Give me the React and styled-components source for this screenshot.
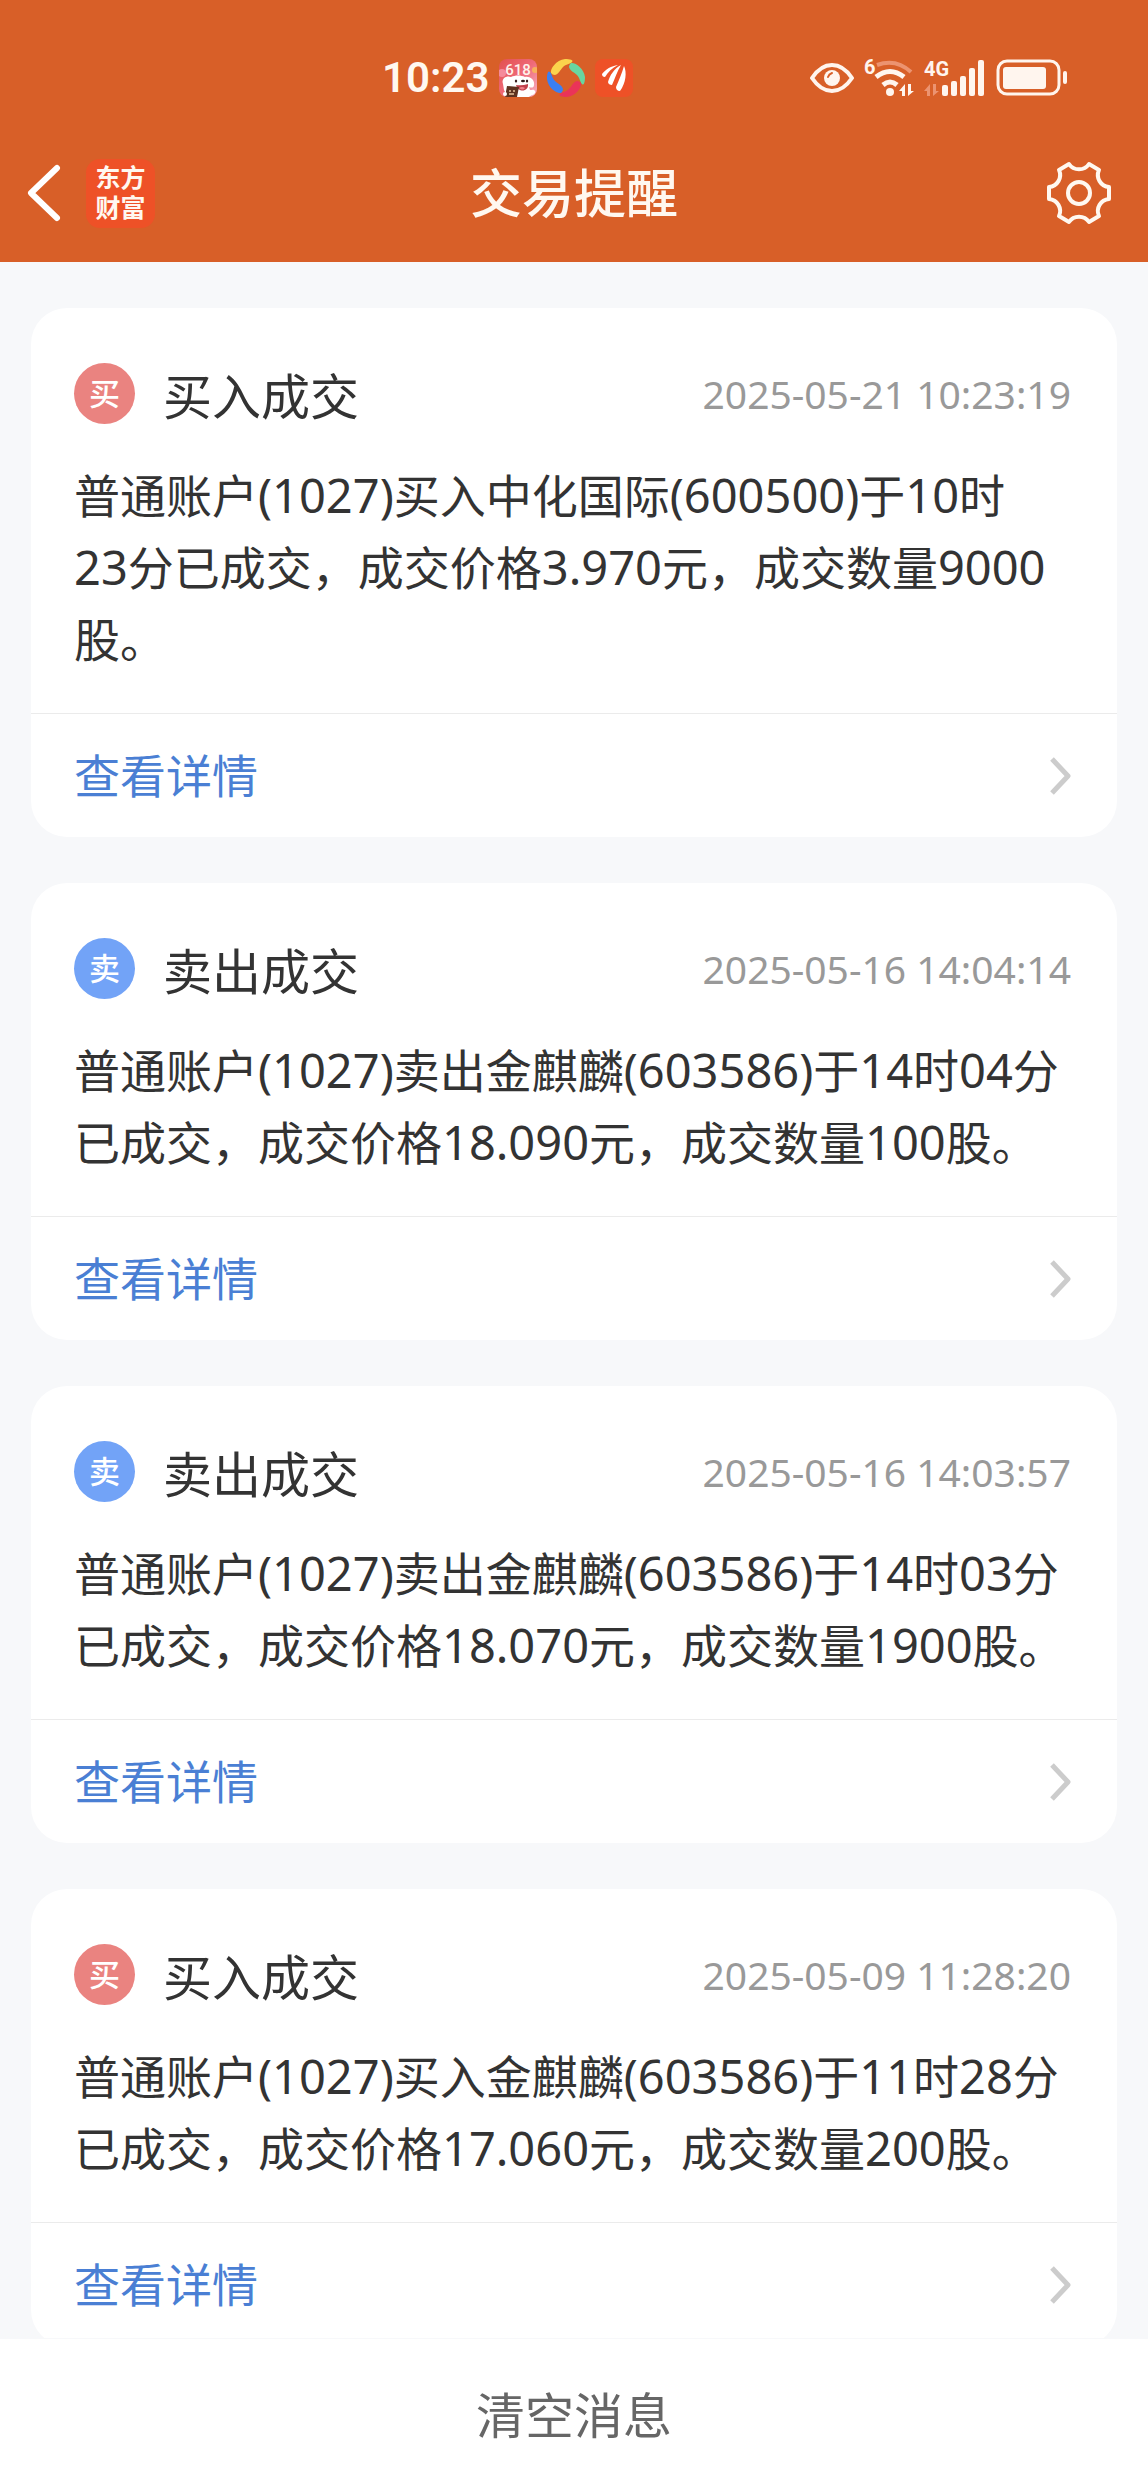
import React from 'react'
import styled, { createGlobalStyle } from 'styled-components'

const messages = [
  {
    id: 1,
    type: 'buy',
    time: '2025-05-21 10:23:19',
    lines: [
      '普通账户(1027)买入中化国际(600500)于10时',
      '23分已成交，成交价格3.970元，成交数量9000',
      '股。',
    ],
  },
  {
    id: 2,
    type: 'sell',
    time: '2025-05-16 14:04:14',
    lines: [
      '普通账户(1027)卖出金麒麟(603586)于14时04分',
      '已成交，成交价格18.090元，成交数量100股。',
    ],
  },
  {
    id: 3,
    type: 'sell',
    time: '2025-05-16 14:03:57',
    lines: [
      '普通账户(1027)卖出金麒麟(603586)于14时03分',
      '已成交，成交价格18.070元，成交数量1900股。',
    ],
  },
  {
    id: 4,
    type: 'buy',
    time: '2025-05-09 11:28:20',
    lines: [
      '普通账户(1027)买入金麒麟(603586)于11时28分',
      '已成交，成交价格17.060元，成交数量200股。',
    ],
  },
]

const types = {
  buy: { badge: '买', title: '买入成交', color: '#ea8380' },
  sell: { badge: '卖', title: '卖出成交', color: '#72a3f7' },
}

function PromoIcon() {
  return (
    <svg width="38" height="38" viewBox="0 0 38 38">
      <defs>
        <linearGradient id="promo" x1="0" y1="0" x2="1" y2="1">
          <stop offset="0" stopColor="#e2504f" />
          <stop offset="0.5" stopColor="#ef6a78" />
          <stop offset="1" stopColor="#f7b3c4" />
        </linearGradient>
        <clipPath id="promoClip">
          <rect width="38" height="38" rx="8" />
        </clipPath>
      </defs>
      <g clipPath="url(#promoClip)">
        <rect width="38" height="38" fill="url(#promo)" />
        <circle cx="3" cy="14" r="4" fill="#f58a9a" />
        <circle cx="36" cy="11" r="3" fill="#f7b05c" />
      </g>
      <text x="19" y="16" textAnchor="middle" fontFamily="Roboto, sans-serif" fontSize="15" fontWeight="500" fill="#fff3ec">618</text>
      <g clipPath="url(#promoClip)">
        <path d="M4 25C2 20 7 16 12 18c4-2 10-2 14 0 5-1 10 3 9 8 0 3-3 3-5 2l1 3c2 0 4-1 5 1s-1 4-3 4l-5 3H9l-4-8z" fill="#fff" />
        <ellipse cx="17" cy="22" rx="1.200" ry="1.500" fill="#3a2020" />
        <ellipse cx="28" cy="22" rx="1.200" ry="1.500" fill="#3a2020" />
        <ellipse cx="24" cy="22" rx="2" ry="1.200" fill="#2b1a1a" />
        <path d="M17 26q6 1 12-1c1 8-10 9-12 1z" fill="#c0404c" />
        <path d="M20 29q3-2 6 0-2 3-6 0z" fill="#f0808a" />
        <path d="M8 27l12 1-2 10H6z" fill="#5e3320" />
        <path d="M10 32h2m2 0h2m-6 3h5" stroke="#e6c39a" strokeWidth="1.500" />
        <circle cx="6" cy="35" r="2" fill="#fff" />
      </g>
    </svg>
  )
}

const petals = ['#fbd44c', '#68d6a0', '#ea3358', '#3b7ff2']

function SwirlIcon() {
  return (
    <svg width="38" height="38" viewBox="0 0 38 38">
      {petals.map((color, i) => (
        <path
          key={color}
          d="M4 14C3 10 9 1 18 0c5 0 9 1 7 3-2 2-6 2-9 5-3 3-4 7-8 8-2 0-3-1-4-2z"
          fill={color}
          transform={`rotate(${i * 90} 19 19)`}
        />
      ))}
    </svg>
  )
}

function BrandIcon() {
  return (
    <svg width="38" height="38" viewBox="0 0 38 38">
      <rect width="38" height="38" rx="8" fill="#ee5127" />
      <g fill="#fff">
        <path d="M7 15C11 10 16 7 23 6C17 9 13 13 10 18C8 18 7 17 7 15z" />
        <path d="M13 23C15 16 19 10 26 6C22 13 20 19 17 26C15 26 13 25 13 23z" />
        <path d="M21 28C24 21 27 14 29 7C32 13 31 24 25 32C22 32 21 30 21 28z" />
      </g>
    </svg>
  )
}

function EyeIcon() {
  return (
    <svg width="44" height="30" viewBox="0 0 44 30">
      <path d="M2 15C8 6 14 2 22 2s14 4 20 13c-6 9-12 13-20 13S8 24 2 15z" fill="none" stroke="#fff5ee" strokeWidth="4" strokeLinejoin="round" />
      <circle cx="22" cy="15" r="8" fill="#fff5ee" />
      <path d="M18 14q1-3 4-4" stroke="#d85f28" strokeWidth="2" strokeLinecap="round" fill="none" />
    </svg>
  )
}

function WifiIcon() {
  return (
    <svg width="50" height="48" viewBox="0 -4 50 48">
      <text x="0" y="16" fontFamily="Roboto, sans-serif" fontSize="20" fontWeight="700" fill="#fff5ee">6</text>
      <path d="M13 7q19-7 34 7" fill="none" stroke="#ec9370" strokeWidth="4" />
      <path d="M12 19q14-11 28 0" fill="none" stroke="#fff5ee" strokeWidth="5" />
      <path d="M19 27q7-6 14 0" fill="none" stroke="#fff5ee" strokeWidth="5" />
      <circle cx="26" cy="34" r="4" fill="#fff5ee" />
      <path d="M35 33l6-7v12h-3v-5zM50 33l-6 5V26h3v7z" fill="#fff5ee" />
    </svg>
  )
}

function SignalIcon() {
  return (
    <svg width="62" height="48" viewBox="0 -4 62 48">
      <text x="0" y="18" fontFamily="Roboto, sans-serif" fontSize="20" fontWeight="700" fill="#fff5ee">4G</text>
      <path d="M0 33l6-7v12H3v-5zM15 33l-6 5V26h3v7z" fill="#ec9370" />
      <g fill="#fff5ee">
        <rect x="18" y="27" width="6" height="11" rx="2" />
        <rect x="27" y="23" width="6" height="15" rx="2" />
        <rect x="36" y="18" width="6" height="20" rx="2" />
        <rect x="45" y="10" width="6" height="28" rx="2" />
        <rect x="54" y="2" width="6" height="36" rx="2" />
      </g>
    </svg>
  )
}

function BatteryIcon() {
  return (
    <svg width="72" height="38" viewBox="0 0 72 38">
      <rect x="2" y="2" width="61" height="33" rx="9" fill="none" stroke="#fff5ee" strokeWidth="3" />
      <rect x="7" y="8" width="43" height="22" rx="3" fill="#fff5ee" />
      <path d="M69 14v9" stroke="#fff5ee" strokeWidth="4" strokeLinecap="round" />
    </svg>
  )
}

function BackIcon() {
  return (
    <svg width="34" height="58" viewBox="0 0 34 58">
      <path d="M30 4L4 29l26 25" fill="none" stroke="#fff" strokeWidth="6" strokeLinecap="round" strokeLinejoin="round" />
    </svg>
  )
}

function GearIcon() {
  return (
    <svg width="66" height="66" viewBox="-33 -33 66 66" fill="none" stroke="#fff8f0" strokeWidth="4" strokeLinejoin="round">
      <path d="M30 -6V6A12 12 0 0 0 20 23L10 29A12 12 0 0 0 -10 29L-20 23A12 12 0 0 0 -30 6V-6A12 12 0 0 0 -20 -23L-10 -29A12 12 0 0 0 10 -29L20 -23A12 12 0 0 0 30 -6Z" />
      <circle r="11" />
    </svg>
  )
}

function ArrowIcon() {
  return (
    <svg width="22" height="40" viewBox="0 0 22 40">
      <path d="M3 3l16 17L3 37" fill="none" stroke="#ccc" strokeWidth="5" strokeLinejoin="round" />
    </svg>
  )
}

function Message({ type, time, lines }) {
  const { badge, title, color } = types[type]
  return (
    <Card>
      <CardMain>
        <CardHead>
          <Badge $color={color}>{badge}</Badge>
          <CardTitle>{title}</CardTitle>
          <Time>{time}</Time>
        </CardHead>
        <Content>
          {lines.map((line) => (
            <Line key={line}>
              {/* odd parts are the figures and their brackets */}
              {line.split(/([\d.()]+)/).map((part, i) => (i % 2 ? <Figures key={i}>{part}</Figures> : part))}
            </Line>
          ))}
        </Content>
      </CardMain>
      <DetailLink href="#">
        <DetailText>查看详情</DetailText>
        <ArrowIcon />
      </DetailLink>
    </Card>
  )
}

function App() {
  return (
    <Screen>
      <GlobalStyle />
      <Header>
        <StatusBar>
          <StatusGroup>
            <Clock>10:23</Clock>
            <PromoIcon />
            <SwirlIcon />
            <BrandIcon />
          </StatusGroup>
          <StatusGroup>
            <EyeIcon />
            <WifiIcon />
            <SignalIcon />
            <BatteryIcon />
          </StatusGroup>
        </StatusBar>
        <NavBar>
          <NavLeft>
            <IconButton aria-label="返回">
              <BackIcon />
            </IconButton>
            <Logo>
              <span>东方</span>
              <span>财富</span>
            </Logo>
          </NavLeft>
          <PageTitle>交易提醒</PageTitle>
          <NavRight>
            <IconButton aria-label="设置">
              <GearIcon />
            </IconButton>
          </NavRight>
        </NavBar>
      </Header>
      <List>
        {messages.map((item) => (
          <Message key={item.id} {...item} />
        ))}
      </List>
      <ClearButton>清空消息</ClearButton>
    </Screen>
  )
}

export default App

const GlobalStyle = createGlobalStyle`
  * {
    box-sizing: border-box;
  }

  body {
    margin: 0;
    font-family: "Noto Sans", "Noto Sans CJK SC", sans-serif;
    color: #333;
    background: #f7f8fa;
  }

  svg {
    display: block;
    flex-shrink: 0;
  }
`

const Screen = styled.div`
  display: flex;
  flex-direction: column;
  height: 100vh;
`

const Header = styled.header`
  flex-shrink: 0;
  background: #d85f28;
  color: #fff8f0;
`

const StatusBar = styled.div`
  display: flex;
  align-items: center;
  justify-content: space-between;
  height: 124px;
  padding: 32px 80px 0 382px;
`

const StatusGroup = styled.div`
  display: flex;
  align-items: center;
  gap: 10px;
`

const Clock = styled.span`
  font-family: Roboto, sans-serif;
  font-size: 42px;
  font-weight: 600;
  line-height: 44px;
`

const NavBar = styled.div`
  display: grid;
  grid-template-columns: 1fr auto 1fr;
  align-items: center;
  height: 138px;
  padding: 0 27px;
`

const NavLeft = styled.div`
  display: flex;
  align-items: center;
  gap: 25px;
`

const NavRight = styled.div`
  display: flex;
  justify-content: flex-end;
  padding-right: 9px;
`

const IconButton = styled.button`
  padding: 0;
  border: none;
  background: none;
  cursor: pointer;
`

const Logo = styled.div`
  display: flex;
  flex-direction: column;
  align-items: center;
  justify-content: center;
  width: 69px;
  height: 69px;
  border-radius: 14px;
  background: #ee5127;
  font-family: "Liberation Sans", "Noto Sans CJK SC", sans-serif;
  font-size: 25px;
  font-weight: 700;
  line-height: 30px;
`

const PageTitle = styled.h1`
  margin: 0;
  font-size: 52px;
  font-weight: 500;
  line-height: 72px;
`

const List = styled.main`
  flex: 1;
  min-height: 0;
  display: flex;
  flex-direction: column;
  gap: 46px;
  padding: 46px 31px;
  overflow-y: auto;
  scrollbar-width: none;
`

const Card = styled.article`
  flex-shrink: 0;
  border-radius: 36px;
  background: #fff;
  overflow: hidden;
`

const CardMain = styled.div`
  padding: 55px 46px 38px 43px;
`

const CardHead = styled.div`
  display: flex;
  align-items: center;
  height: 61px;
  margin-bottom: 35px;
`

const Badge = styled.span`
  width: 61px;
  height: 61px;
  border-radius: 50%;
  background: ${(props) => props.$color};
  color: #fff;
  font-family: "Noto Sans CJK SC", sans-serif;
  font-size: 31px;
  font-weight: 500;
  line-height: 58px;
  text-align: center;
`

const CardTitle = styled.h2`
  flex: 1;
  margin: 0 0 0 28px;
  padding-top: 4px;
  font-size: 49px;
  font-weight: 400;
  line-height: 72px;
`

const Time = styled.time`
  color: #999;
  font-size: 39px;
  line-height: 60px;
`

const Content = styled.p`
  margin: 0;
  font-size: 46px;
  line-height: 72px;
`

const Line = styled.span`
  display: block;
`

const Figures = styled.span`
  font-size: 47px;
  line-height: 1;
`

const DetailLink = styled.a`
  display: flex;
  align-items: center;
  justify-content: space-between;
  height: 124px;
  padding: 0 46px 0 43px;
  border-top: 1px solid #ebebeb;
  color: #4a7fd4;
  font-size: 46px;
  text-decoration: none;
`

const DetailText = styled.span`
  padding-bottom: 6px;
`

const ClearButton = styled.button`
  flex-shrink: 0;
  height: 154px;
  padding: 0 0 6px;
  border: none;
  border-top: 1px solid #f7f8fa;
  background: #fff;
  color: #666;
  font-family: inherit;
  font-size: 49px;
  cursor: pointer;
`
